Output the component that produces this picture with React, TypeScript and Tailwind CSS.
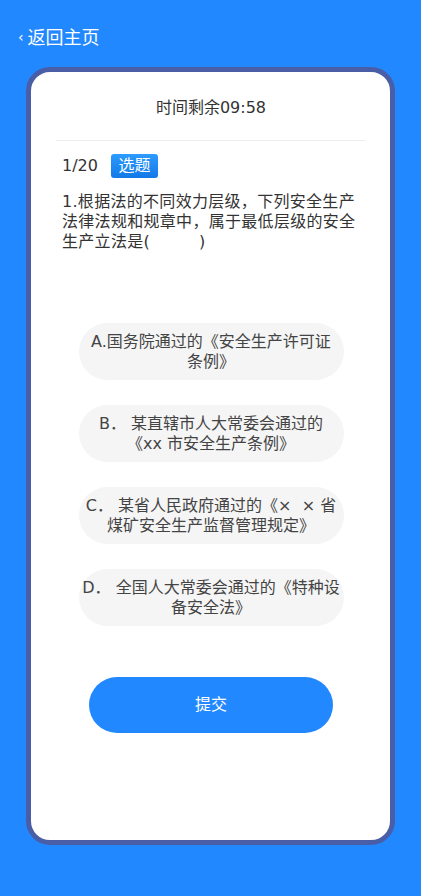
import React from 'react';

const options: string[][] = [
  ['A.国务院通过的《安全生产许可证', '条例》'],
  ['B． 某直辖市人大常委会通过的', '《xx 市安全生产条例》'],
  ['C． 某省人民政府通过的《×  × 省', '煤矿安全生产监督管理规定》'],
  ['D． 全国人大常委会通过的《特种设', '备安全法》'],
];

const App: React.FC = () => {
  return (
    <div
      className="min-h-[896px] bg-[#2188ff] flex flex-col"
      style={{ fontFamily: '"DejaVu Sans", "Noto Sans CJK SC", sans-serif' }}
    >
      {/* 顶部返回 */}
      <div className="flex items-start pl-[18px] pt-[27px] h-[67px]">
        <span className="text-white text-[14px] leading-[20px] mr-[4px]">‹</span>
        <span className="text-white text-[18px] leading-[21px]">返回主页</span>
      </div>

      {/* 题目卡片 */}
      <div className="mx-[26px] h-[778px] border-[5px] border-[#4a5ea8] rounded-[24px] bg-white flex flex-col pl-[25px] pr-[24px]">
        <div className="pt-[26px] text-center text-[16px] leading-[20px] text-[#333]">
          时间剩余09:58
        </div>
        <div className="mt-[22px] h-px bg-[#eeeeee]" />

        <div className="mt-[13px] flex items-center pl-[6px]">
          <span className="text-[16px] leading-[20px] text-[#333]">1/20</span>
          <span className="ml-[13px] h-[24px] w-[47px] rounded-[3px] bg-gradient-to-b from-[#2d9bff] to-[#1279e6] text-white text-[16px] leading-[24px] text-center">
            选题
          </span>
        </div>

        <p className="mt-[14px] pl-[6px] text-[16px] leading-[20px] text-[#333] tracking-[0.3px]">
          1.根据法的不同效力层级，下列安全生产
          <br />
          法律法规和规章中，属于最低层级的安全
          <br />
          生产立法是(　　　)
        </p>

        <div className="mt-[71px] flex flex-col items-center gap-[25px]">
          {options.map((lines, i) => (
            <div
              key={i}
              className="w-[265px] h-[57px] rounded-full bg-[#f5f5f5] flex flex-col items-center justify-center text-[16px] leading-[20px] text-[#444] whitespace-pre"
            >
              <span>{lines[0]}</span>
              <span>{lines[1]}</span>
            </div>
          ))}
        </div>

        <div className="mt-[51px] flex justify-center">
          <button className="w-[244px] h-[56px] rounded-full bg-[#2188ff] text-white text-[16px]">
            提交
          </button>
        </div>
      </div>
    </div>
  );
};

export default App;
